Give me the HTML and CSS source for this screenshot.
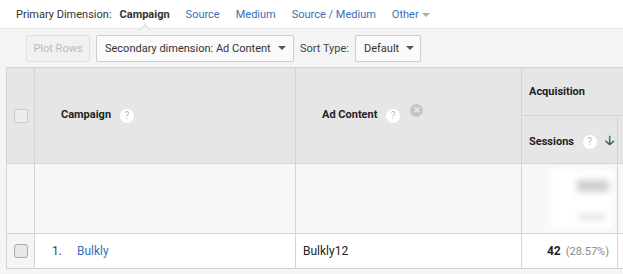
FILE: index.html
```html
<!DOCTYPE html>
<html lang="en">
<head>
<meta charset="UTF-8">
<title>Campaigns</title>
<link rel="stylesheet" href="styles.css">
</head>
<body>
<div class="dims">
    <span class="label">Primary Dimension:</span>
    <span class="dim current">Campaign</span>
    <a class="dim">Source</a>
    <a class="dim">Medium</a>
    <a class="dim">Source / Medium</a>
    <a class="dim other">Other <span class="caret light"></span></a>
</div>
<div class="toolbar">
    <button class="plot">Plot Rows</button>
    <div class="select wide">Secondary dimension: Ad Content <span class="caret"></span></div>
    <span class="sort-label">Sort Type:</span>
    <div class="select">Default <span class="caret"></span></div>
</div>
<div class="table-wrap">
<table class="report">
    <colgroup>
        <col class="c-check">
        <col class="c-campaign">
        <col class="c-content">
        <col class="c-sessions">
        <col class="c-next">
    </colgroup>
    <tr class="head1">
        <th rowspan="2" class="check"><span class="box"></span></th>
        <th rowspan="2" class="name">Campaign <span class="help">?</span></th>
        <th rowspan="2" class="name">Ad Content <span class="help">?</span><span class="remove">&times;</span></th>
        <th colspan="2" class="group">Acquisition</th>
    </tr>
    <tr class="head2">
        <th class="metric">Sessions <span class="help">?</span> <span class="arrow">&#129123;</span></th>
        <th></th>
    </tr>
    <tr class="total">
        <td class="check"></td>
        <td></td>
        <td></td>
        <td class="blur-cell"><span class="blur1"></span><span class="blur2"></span><span class="blur3"></span></td>
        <td></td>
    </tr>
    <tr class="row">
        <td class="check"><span class="box round"></span></td>
        <td><span class="idx">1.</span><a class="link">Bulkly</a></td>
        <td>Bulkly12</td>
        <td class="num"><b>42</b> <span class="pct">(28.57%)</span></td>
        <td></td>
    </tr>
</table>
</div>
</body>
</html>
```
FILE: styles.css
```css
body {
    margin: 0;
    font-family: Roboto, Arial, sans-serif;
    font-size: 11px;
    color: #333;
    background: #f5f5f5;
    width: 623px;
    height: 274px;
    overflow: hidden;
}

.dims {
    height: 29px;
    background: #fff;
    display: flex;
    align-items: center;
    padding-left: 16px;
    box-sizing: border-box;
    border-bottom: 1px solid #e8e8e8;
}
.dims .label {
    color: #333;
    margin-right: 8px;
}
.dims .dim {
    margin-right: 16px;
    color: #3a6fb6;
}
.dims .current {
    color: #333;
    font-weight: bold;
    position: relative;
}
/* little pointer under the current dimension */
.dims .current::after {
    content: "";
    position: absolute;
    left: 21px;
    top: 18px;
    width: 7px;
    height: 7px;
    background: #f4f4f4;
    border-left: 1px solid #dcdcdc;
    border-top: 1px solid #dcdcdc;
    transform: rotate(45deg);
}
.caret {
    display: inline-block;
    width: 0;
    height: 0;
    border-left: 4px solid transparent;
    border-right: 4px solid transparent;
    border-top: 4px solid #555;
    vertical-align: middle;
    margin-left: 8px;
}
.caret.light {
    border-top-color: #aaa;
    margin-left: 1px;
}

.toolbar {
    height: 38px;
    background: #f4f4f4;
    display: flex;
    align-items: center;
    padding-left: 26px;
    box-sizing: border-box;
}
.plot {
    height: 27px;
    width: 64px;
    font-family: inherit;
    font-size: 11px;
    color: #bbb;
    background: #f1f1f1;
    border: 1px solid #e0e0e0;
    border-radius: 2px;
    margin-right: 6px;
    padding: 0;
}
.select {
    height: 27px;
    box-sizing: border-box;
    border: 1px solid #ccc;
    border-radius: 2px;
    background: #fafafa;
    display: flex;
    align-items: center;
    padding: 0 6px 0 8px;
    color: #333;
    white-space: nowrap;
}
.select.wide {
    width: 198px;
    justify-content: space-between;
    padding-right: 7px;
}
.select .caret {
    margin-left: 7px;
}
.select.wide .caret {
    margin-left: 0;
}
.sort-label {
    color: #444;
    margin: 0 6px 0 6px;
}

.table-wrap {
    overflow: hidden;
    padding-left: 6px;
}
.report {
    border-collapse: collapse;
    table-layout: fixed;
    width: 668px;
    border-top: 1px solid #d4d4d4;
}
.c-check { width: 28px; }
.c-campaign { width: 261px; }
.c-content { width: 226px; }
.c-sessions { width: 96px; }
.c-next { width: 57px; }

.report th, .report td {
    border: 1px solid #d4d4d4;
    padding: 0;
    text-align: left;
    white-space: nowrap;
}
.report th {
    background: #e6e6e6;
    font-weight: bold;
    color: #222;
    font-size: 11px;
}
.head1 th { height: 47px; }
.head2 th {
    height: 43px;
    padding-top: 4px;
}
.report th.name { padding-left: 26px; }
.report th.group { padding-left: 7px; }
.report th.metric { padding-left: 7px; }

.box {
    display: block;
    width: 12px;
    height: 12px;
    border: 1px solid #ccc;
    background: #ececec;
    margin: 0 auto;
}
.box.round {
    border-radius: 3px;
    border-color: #aaa;
    background: #e8e8e8;
}

.help {
    display: inline-block;
    width: 14px;
    height: 14px;
    border-radius: 50%;
    background: #fff;
    color: #bbb;
    font-size: 10px;
    font-weight: normal;
    text-align: center;
    line-height: 14px;
    margin-left: 6px;
    vertical-align: middle;
}
.remove {
    display: inline-block;
    position: relative;
    top: -5px;
    width: 13px;
    height: 13px;
    border-radius: 50%;
    background: #c4c4c4;
    color: #e8e8e8;
    font-size: 13px;
    font-weight: bold;
    text-align: center;
    line-height: 12px;
    margin-left: 10px;
    vertical-align: middle;
}
.arrow {
    color: #555;
    font-size: 13px;
    margin-left: 6px;
    font-weight: bold;
    vertical-align: middle;
}

.total td {
    height: 69px;
    background: #f8f8f8;
}
.blur-cell {
    position: relative;
}
.blur1, .blur2, .blur3 {
    position: absolute;
    background: #fff;
    filter: blur(2px);
}
.blur1 {
    right: 4px;
    top: 6px;
    width: 62px;
    height: 58px;
}
.blur2 {
    right: 8px;
    top: 16px;
    width: 32px;
    height: 12px;
    background: #cfcfcf;
    filter: blur(3px);
}
.blur3 {
    right: 12px;
    top: 50px;
    width: 26px;
    height: 6px;
    background: #e2e2e2;
    filter: blur(3px);
}

.row td {
    height: 34px;
    background: #fff;
    color: #222;
    padding-left: 7px;
    font-size: 12px;
}
.row td.check {
    background: #f5f5f5;
    padding-left: 0;
}
.idx {
    display: inline-block;
    margin-left: 10px;
    width: 25px;
    color: #444;
}
.link { color: #3a6fb6; }
.row td.num {
    text-align: right;
    padding-right: 8px;
}
.num b { color: #222; }
.pct {
    color: #888;
    font-size: 11px;
    margin-left: 2px;
}
```
